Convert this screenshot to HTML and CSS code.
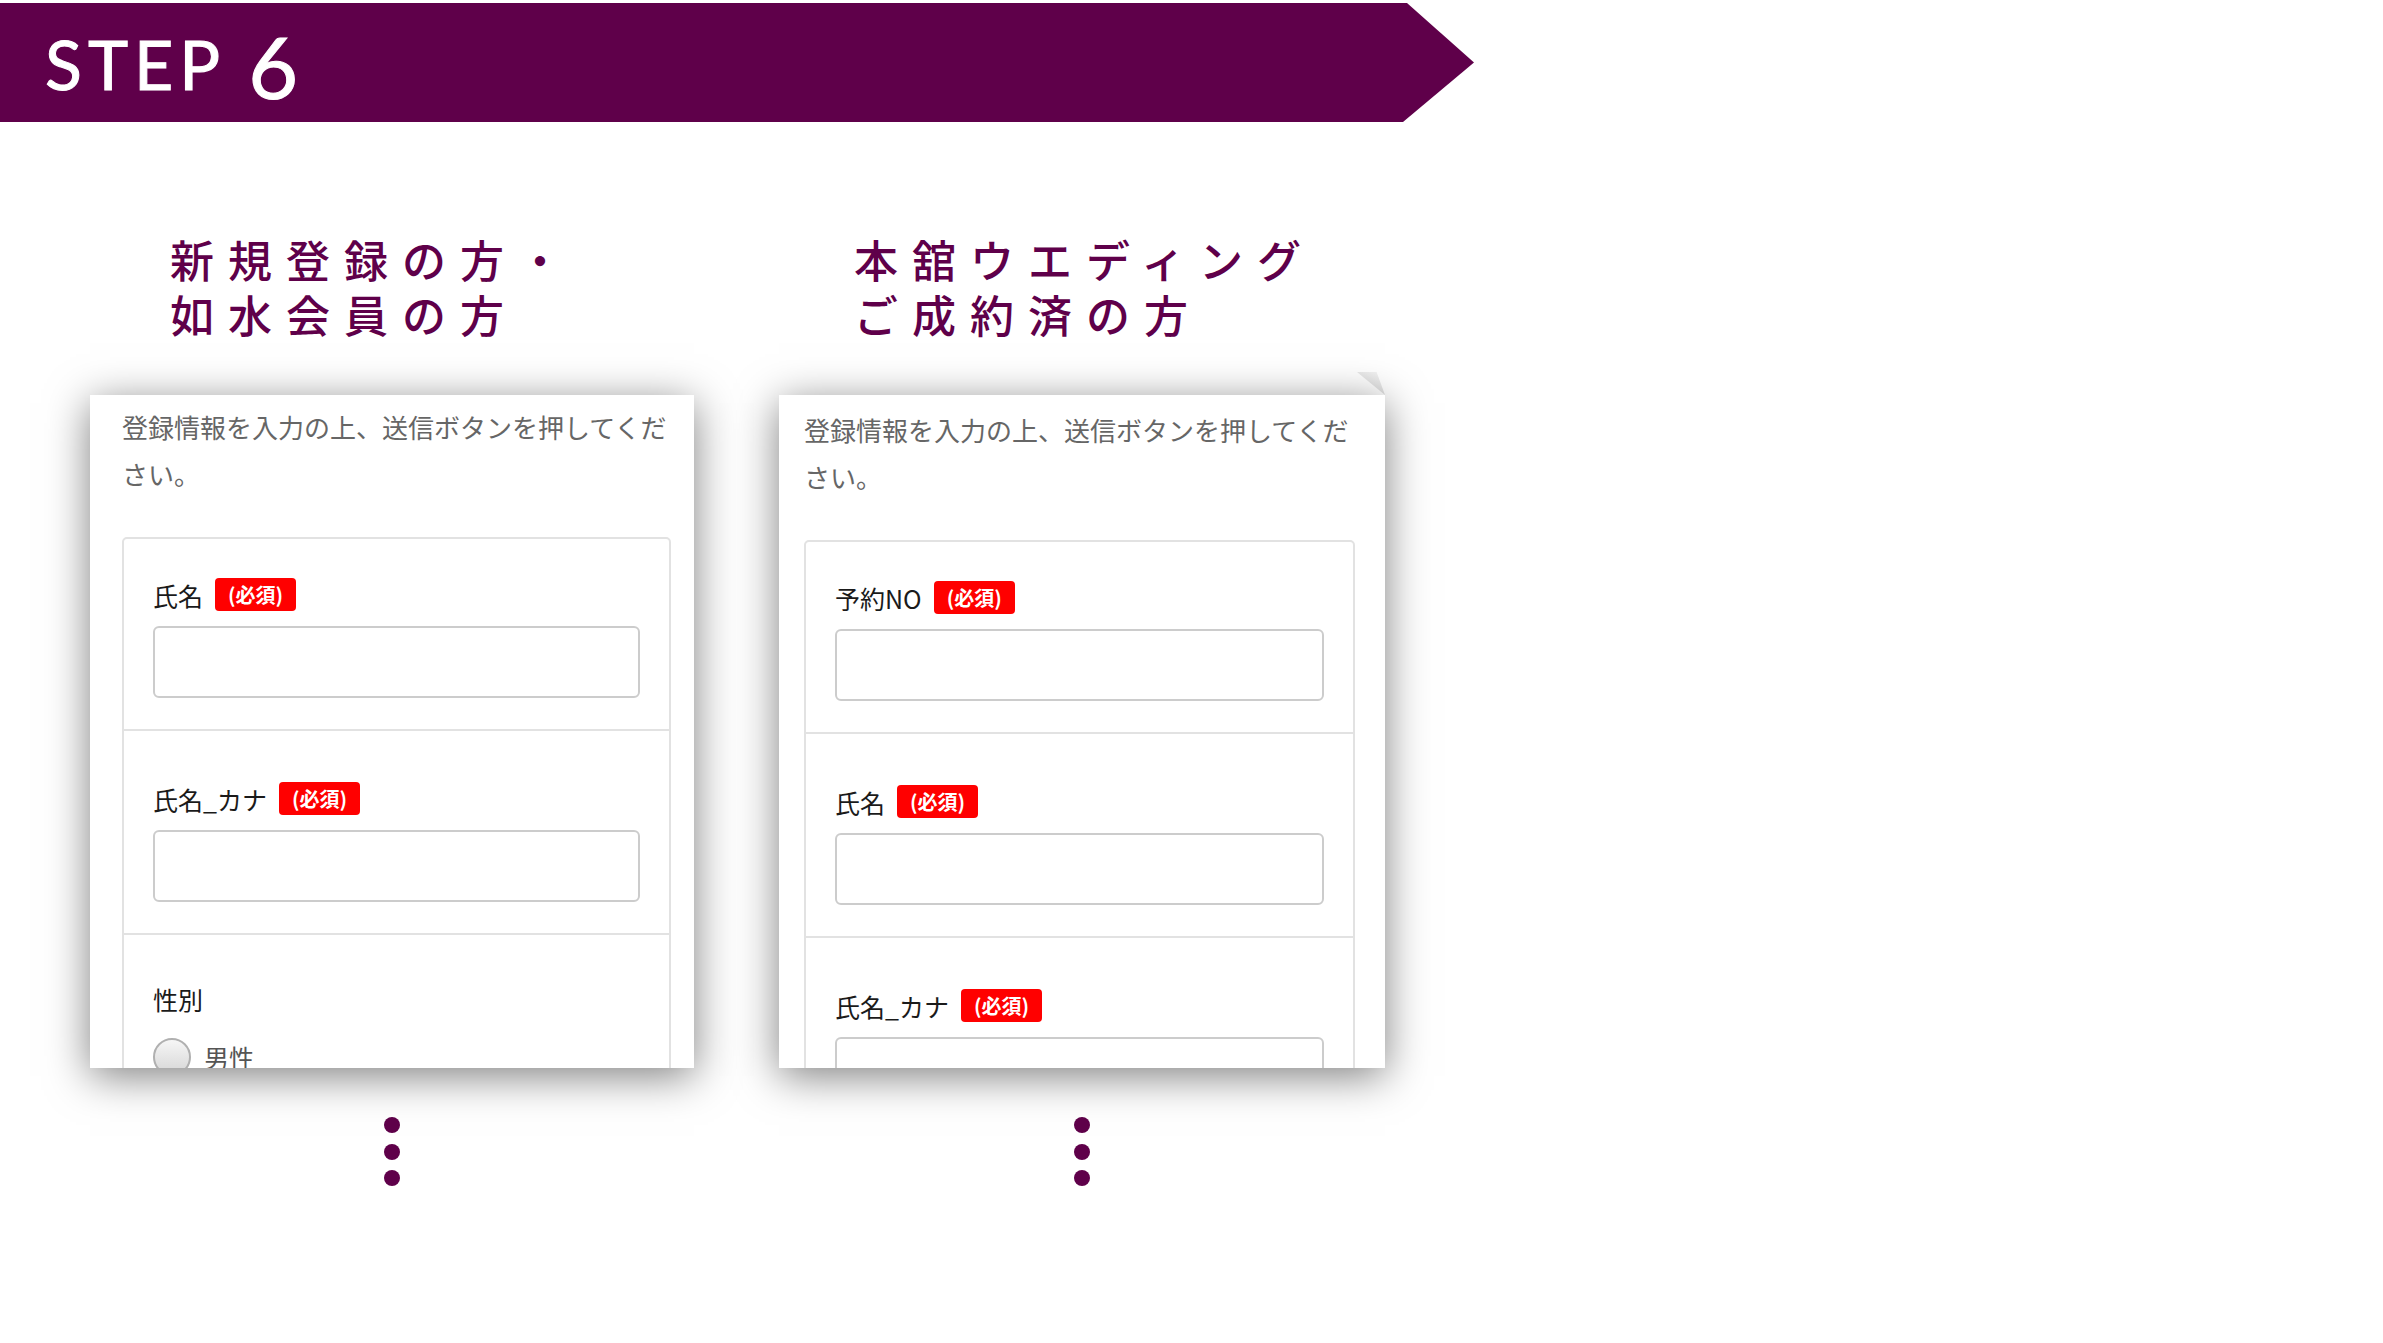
FILE: index.html
```html
<!DOCTYPE html>
<html lang="ja">
<head>
    <meta charset="UTF-8">
    <meta name="viewport" content="width=device-width, initial-scale=1.0">
    <title>STEP 6 - 登録フォーム</title>
    <link rel="stylesheet" href="styles.css">
</head>
<body>
    <header class="step-banner">
        <span class="step-label">STEP</span>
        <span class="step-num">6</span>
    </header>

    <main class="columns">
        <!-- 新規登録 -->
        <section class="column column--member">
            <h2 class="column-title">
                <span class="title-line">新規登録の方・</span>
                <span class="title-line">如水会員の方</span>
            </h2>
            <div class="card card--member">
                <div class="card-inner">
                    <p class="intro">登録情報を入力の上、送信ボタンを押してください。</p>
                    <div class="field-box">
                        <div class="field">
                            <div class="field-label">氏名<span class="required">(必須)</span></div>
                            <input class="text-input" type="text">
                        </div>
                        <div class="field">
                            <div class="field-label">氏名_カナ<span class="required">(必須)</span></div>
                            <input class="text-input" type="text">
                        </div>
                        <div class="field field--radio">
                            <div class="field-label">性別</div>
                            <label class="radio-row">
                                <span class="radio"></span>
                                <span class="radio-text">男性</span>
                            </label>
                        </div>
                    </div>
                </div>
            </div>
            <div class="more">
                <span class="dot"></span>
                <span class="dot"></span>
                <span class="dot"></span>
            </div>
        </section>

        <!-- 本舘ウエディング -->
        <section class="column column--wedding">
            <h2 class="column-title">
                <span class="title-line">本舘ウエディング</span>
                <span class="title-line">ご成約済の方</span>
            </h2>
            <div class="card card--wedding">
                <div class="card-inner">
                    <p class="intro">登録情報を入力の上、送信ボタンを押してください。</p>
                    <div class="field-box">
                        <div class="field">
                            <div class="field-label">予約NO<span class="required">(必須)</span></div>
                            <input class="text-input" type="text">
                        </div>
                        <div class="field">
                            <div class="field-label">氏名<span class="required">(必須)</span></div>
                            <input class="text-input" type="text">
                        </div>
                        <div class="field">
                            <div class="field-label">氏名_カナ<span class="required">(必須)</span></div>
                            <input class="text-input" type="text">
                        </div>
                    </div>
                </div>
            </div>
            <div class="more">
                <span class="dot"></span>
                <span class="dot"></span>
                <span class="dot"></span>
            </div>
        </section>
    </main>
</body>
</html>
```

FILE: styles.css
```css
:root {
    --brand: #5f004a;
    --text-main: #1a1a1a;
    --text-sub: #666666;
    --line: #e2e2e2;
    --input-line: #cccccc;
    --required: #ff0000;
}

* {
    margin: 0;
    padding: 0;
    box-sizing: border-box;
}

body {
    font-family: "Noto Sans CJK JP", "Noto Sans", sans-serif;
    background: #ffffff;
    color: var(--text-main);
    width: 2383px;
    min-height: 1343px;
    overflow: hidden;
}

/* banner */
.step-banner {
    margin-top: 3px;
    width: 1474px;
    height: 119px;
    background: var(--brand);
    clip-path: polygon(0 0, 1407px 0, 100% 50%, 1403px 100%, 0 100%);
    display: flex;
    align-items: center;
    padding-left: 45px;
    color: #ffffff;
    font-family: Lato, "Open Sans", sans-serif;
}

.step-label {
    font-size: 68px;
    line-height: 1;
    letter-spacing: 6px;
    margin-top: 2px;
    -webkit-text-stroke: 1px #ffffff;
}

.step-num {
    font-size: 86px;
    line-height: 1;
    margin-left: 22px;
    margin-top: 6px;
    -webkit-text-stroke: 1px #ffffff;
}

/* two columns */
.columns {
    display: flex;
    gap: 85px;
    padding-left: 90px;
    margin-top: 110px;
}

.column {
    display: flex;
    flex-direction: column;
}

.column--member {
    width: 604px;
}

.column--wedding {
    width: 606px;
}

.column-title {
    display: flex;
    flex-direction: column;
    font-size: 44px;
    font-weight: 500;
    letter-spacing: 14px;
    color: var(--brand);
    margin-bottom: 53px;
}

.title-line {
    display: block;
    height: 55px;
    line-height: 55px;
    overflow: visible;
}

.column--member .column-title {
    margin-left: 80px;
}

.column--wedding .column-title {
    margin-left: 75px;
}

/* form screenshot card */
.card {
    position: relative;
    height: 673px;
    background: #ffffff;
    box-shadow: 0 8px 40px rgba(0, 0, 0, 0.5);
}

.card--wedding::after {
    content: "";
    position: absolute;
    right: 0;
    top: -23px;
    width: 28px;
    height: 23px;
    background: linear-gradient(200deg, #f2f2f2, #b8b8b8);
    clip-path: polygon(0 0, 70% 0, 100% 100%);
}

.card-inner {
    height: 100%;
    overflow: hidden;
}

.card--member .card-inner {
    padding: 8px 23px 0 32px;
}

.card--wedding .card-inner {
    padding: 11px 30px 0 25px;
}

.intro {
    font-size: 26px;
    line-height: 47px;
    color: var(--text-sub);
    margin-bottom: 40px;
}

.field-box {
    border: 2px solid var(--line);
    border-radius: 5px 5px 0 0;
}

.field {
    padding: 51px 29px 31px;
}

.field:first-child {
    padding-top: 39px;
}

.field + .field {
    border-top: 2px solid var(--line);
}

.field-label {
    display: flex;
    align-items: center;
    gap: 12px;
    height: 33px;
    margin-bottom: 15px;
    font-size: 25px;
    color: var(--text-main);
}

.field--radio {
    padding-top: 47px;
}

.required {
    display: inline-flex;
    align-items: center;
    height: 33px;
    padding: 0 13px;
    border-radius: 4px;
    background: var(--required);
    color: #ffffff;
    font-size: 20px;
    font-weight: 700;
}

.text-input {
    display: block;
    width: 100%;
    height: 72px;
    border: 2px solid var(--input-line);
    border-radius: 6px;
    background: #ffffff;
}

.radio-row {
    display: flex;
    align-items: center;
    gap: 13px;
    padding-top: 8px;
}

.radio {
    width: 38px;
    height: 38px;
    border-radius: 50%;
    border: 2px solid #b0b0b0;
    background: linear-gradient(180deg, #f6f6f6, #d6d6d6);
}

.radio-text {
    font-size: 25px;
    color: #555555;
}

/* continuation dots */
.more {
    display: flex;
    flex-direction: column;
    align-items: center;
    gap: 10.5px;
    margin-top: 49px;
}

.dot {
    width: 16px;
    height: 16px;
    border-radius: 50%;
    background: var(--brand);
}
```
